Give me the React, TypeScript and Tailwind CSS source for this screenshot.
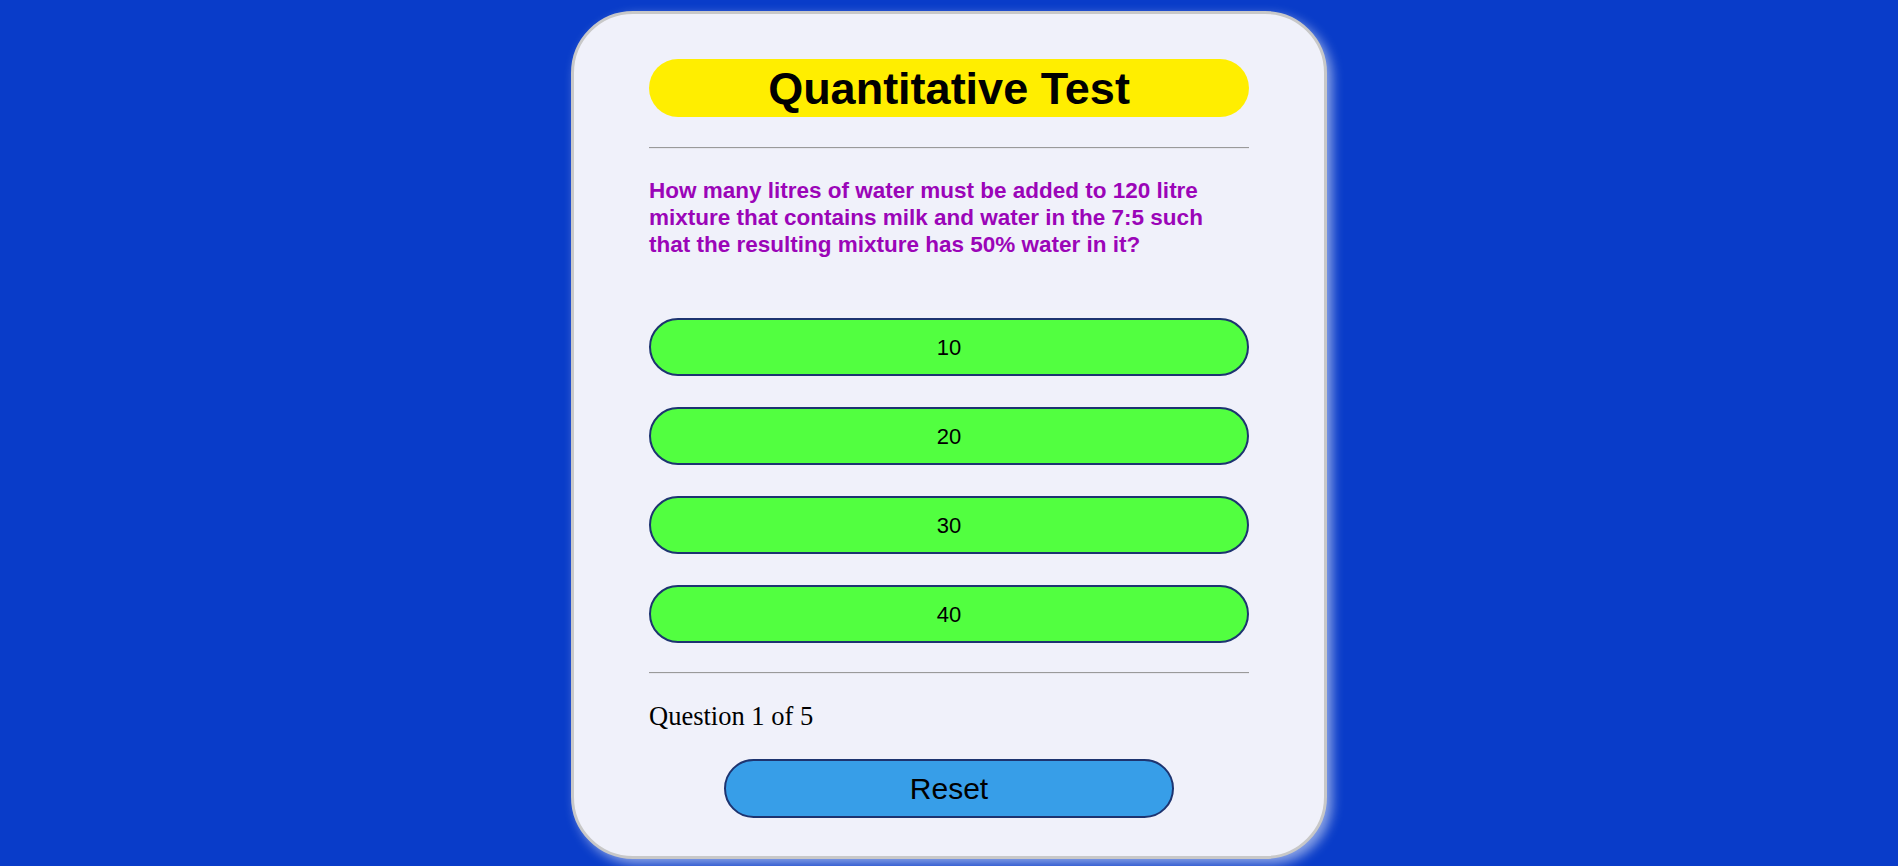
import { useState } from "react";

const questions = [
  {
    text: "How many litres of water must be added to 120 litre mixture that contains milk and water in the 7:5 such that the resulting mixture has 50% water in it?",
    options: ["10", "20", "30", "40"],
  },
];

const App = () => {
  const [current] = useState(0);
  const q = questions[current];

  return (
    <div className="min-h-[866px] w-full bg-[#093cc9] pt-[11px] font-['Liberation_Sans',Arial,sans-serif]">
      <div className="mx-auto w-[756px] rounded-[62px] border-[3px] border-[#c8c8c8] bg-[#f0f1fa] px-[75px] pt-[45px] pb-[38px] shadow-[5px_5px_12px_rgba(255,255,255,0.55)]">
        <div className="flex h-[58px] items-center justify-center rounded-full bg-[#ffee00]">
          <h1 className="text-[45px] font-bold leading-none text-black">Quantitative Test</h1>
        </div>

        <hr className="mt-[30px] border-t border-b border-t-[#9a9a9a] border-b-[#e6e6ee]" />

        <p className="mt-[28px] pr-[12px] text-[22.5px] font-bold leading-[27px] text-[#9b05b8]">{q.text}</p>

        <div className="mt-[60px] flex flex-col gap-[31px]">
          {q.options.map((opt) => (
            <button
              key={opt}
              className="h-[58px] w-full rounded-full border-2 border-[#1d3470] bg-[#52ff40] text-[22px] text-black"
            >
              {opt}
            </button>
          ))}
        </div>

        <hr className="mt-[29px] border-t border-b border-t-[#9a9a9a] border-b-[#e6e6ee]" />

        <p className="mt-[27px] font-['Liberation_Serif','Times_New_Roman',serif] text-[26.5px] leading-[31px] text-black">
          Question {current + 1} of 5
        </p>

        <div className="mt-[27px] flex justify-center">
          <button className="h-[59px] w-[450px] rounded-full border-2 border-[#1d3470] bg-[#379ee8] text-[30px] text-black">
            Reset
          </button>
        </div>
      </div>
    </div>
  );
};

export default App;
